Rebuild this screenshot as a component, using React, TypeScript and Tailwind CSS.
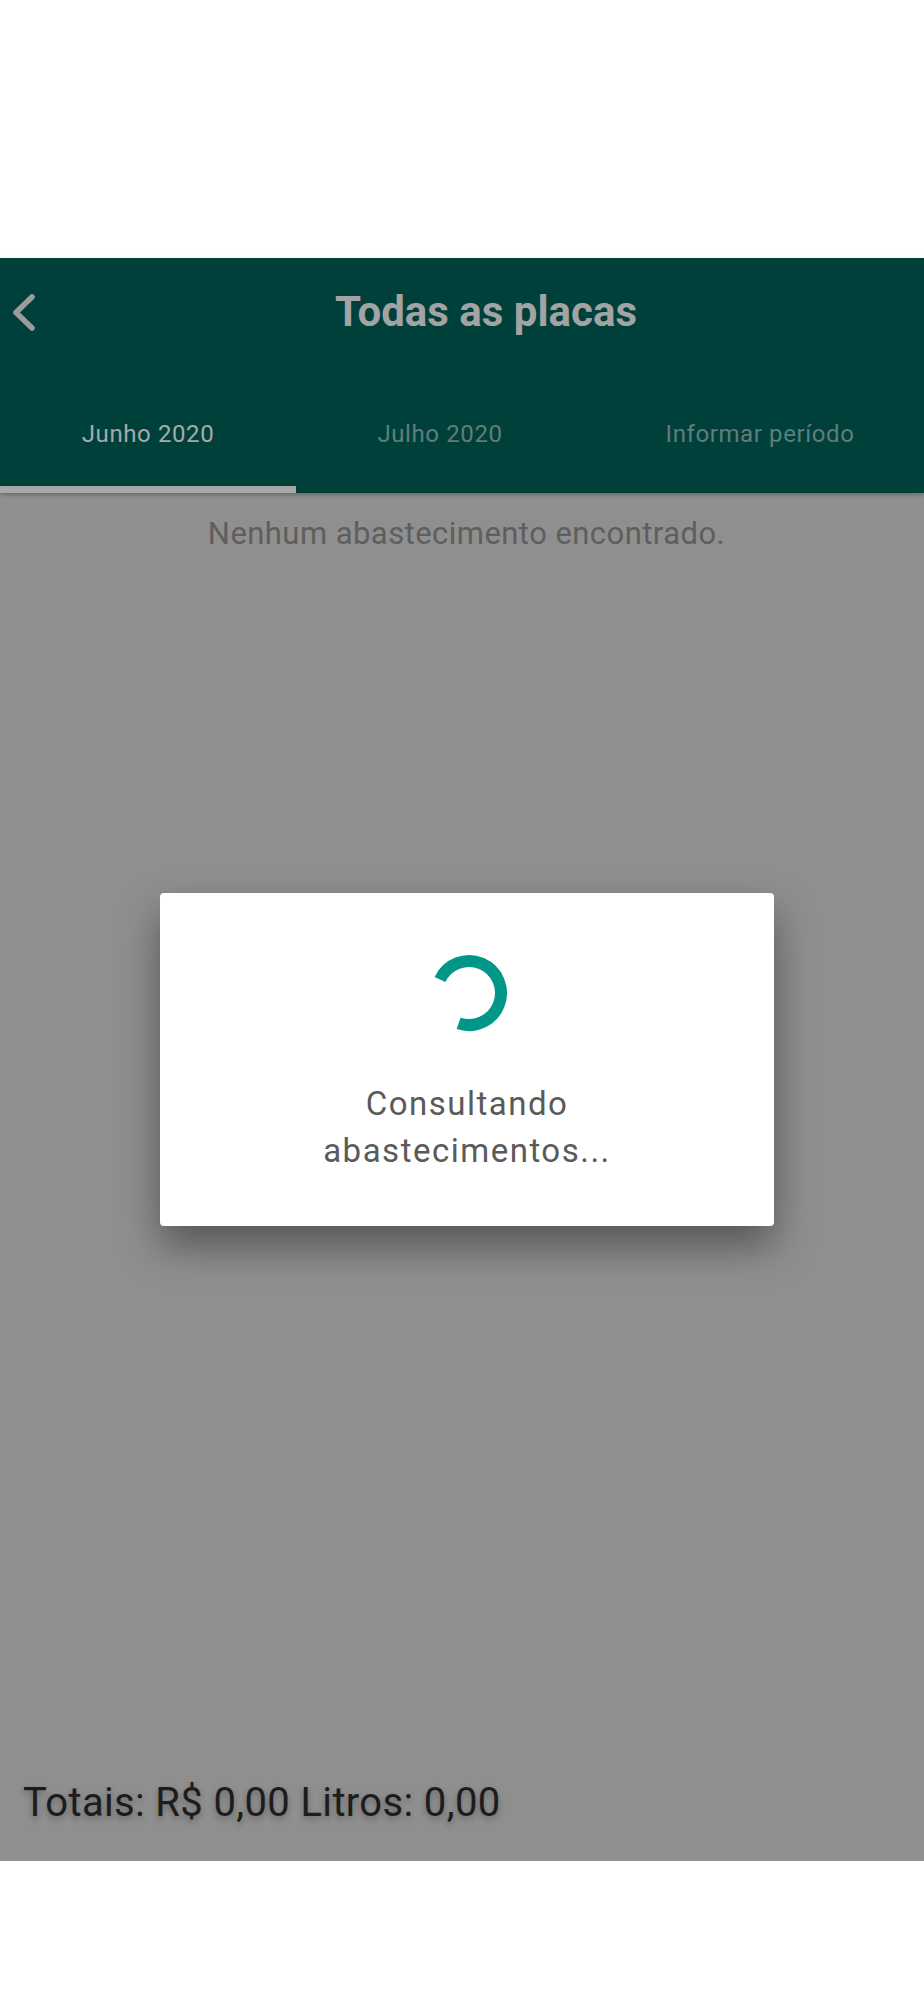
import React from "react";

export default function App() {
  const font = { fontFamily: "Roboto, 'Noto Sans', Arial, sans-serif" };
  return (
    <div className="w-[924px] h-[2000px] bg-white flex flex-col" style={font}>
      <div className="h-[258px] shrink-0 bg-white" />
      <div className="relative flex flex-col h-[1603px] shrink-0 bg-[#8f8f8f]">
        {/* header */}
        <div className="flex flex-col bg-[#00403a] shadow-[0_2px_4px_rgba(0,0,0,0.25)] z-10">
          <div className="h-[136px] flex flex-row items-start pt-[29px]">
            <div className="w-[56px] h-[50px] flex items-start">
              <svg width="56" height="50" viewBox="0 0 56 50">
                <polyline
                  points="32,10 16,25.5 32,41"
                  fill="none"
                  stroke="#9c9c9c"
                  strokeWidth="5.5"
                  strokeLinecap="round"
                  strokeLinejoin="round"
                />
              </svg>
            </div>
            <div className="flex-1 pr-[8px] text-center text-[42px] leading-[50px] font-bold text-[#a3a3a3]">
              Todas as placas
            </div>
          </div>
          <div className="h-[99px] flex flex-row">
            <div className="w-[296px] flex flex-col justify-between">
              <div className="pt-[26px] text-center text-[24px] leading-[28px] font-normal tracking-[0.6px] text-[#a6aaa8]">
                Junho 2020
              </div>
              <div className="h-[7px] bg-[#a8a8a8]" />
            </div>
            <div className="w-[288px] flex flex-col">
              <div className="pt-[26px] text-center text-[24px] leading-[28px] font-normal tracking-[0.6px] text-[#5f7e78]">
                Julho 2020
              </div>
            </div>
            <div className="flex-1 flex flex-col">
              <div className="pt-[26px] pl-[12px] text-center text-[24px] leading-[28px] font-normal tracking-[0.6px] text-[#5f7e78] whitespace-nowrap">
                Informar período
              </div>
            </div>
          </div>
        </div>
        {/* content */}
        <div className="flex-1 flex flex-col">
          <div className="pt-[23px] pl-[9px] text-center text-[31px] leading-[36px] tracking-[0.45px] text-[#5e5e5e]">
            Nenhum abastecimento encontrado.
          </div>
          <div className="flex-1" />
          <div className="pl-[23px] pb-[35px] text-[40px] leading-[47px] tracking-[0.35px] text-[#1c1c1c] [text-shadow:0_3px_6px_rgba(0,0,0,0.3)]">
            Totais: R$ 0,00 Litros: 0,00
          </div>
        </div>
        {/* dialog */}
        <div className="absolute left-[160px] top-[635px] w-[614px] h-[333px] bg-white rounded-[4px] shadow-[0_20px_40px_rgba(0,0,0,0.4)] flex flex-col items-center pt-[60px] z-20">
          <svg width="80" height="80" viewBox="0 0 80 80" className="ml-[4px]">
            <path
              d="M 11 26.5 A 32 32 0 1 1 29.6 70.3"
              fill="none"
              stroke="#009688"
              strokeWidth="12"
            />
          </svg>
          <div className="mt-[47px] text-center text-[33px] leading-[47px] tracking-[1.5px] text-[#5a5a5a]">
            <div>Consultando</div>
            <div>abastecimentos...</div>
          </div>
        </div>
      </div>
      <div className="flex-1 bg-white" />
    </div>
  );
}
